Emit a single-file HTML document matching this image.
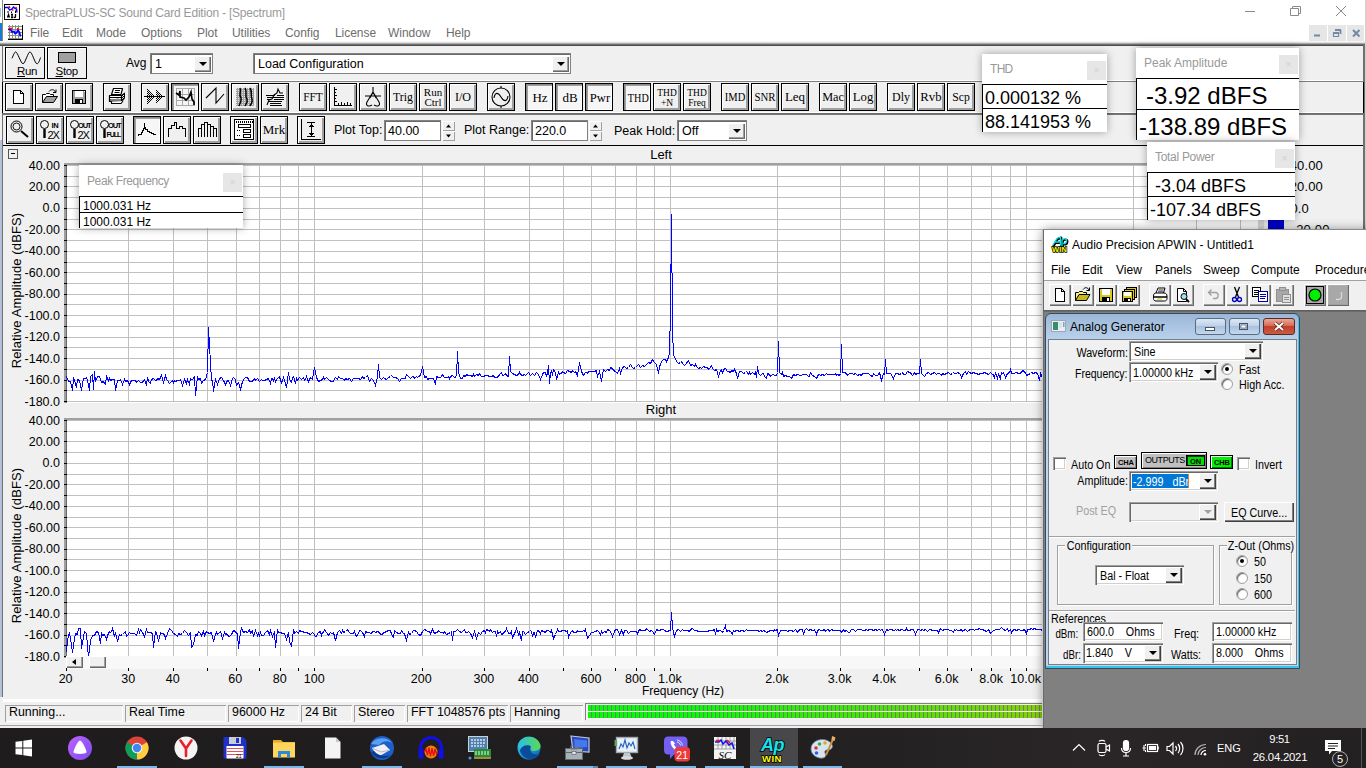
<!DOCTYPE html>
<html lang="en"><head><meta charset="utf-8"><title>SpectraPLUS-SC Sound Card Edition - [Spectrum]</title>
<style>
*{box-sizing:border-box;margin:0;padding:0}
html,body{width:1366px;height:768px;overflow:hidden;background:#f0f0f0;font-family:"Liberation Sans",sans-serif;font-size:12px;color:#000}
.a{position:absolute}
.t{position:absolute;white-space:nowrap;line-height:1}
svg{position:absolute;overflow:visible}
/* classic toolbar buttons */
.b{position:absolute;width:28px;height:28px;background:#f0f0f0;border:1px solid #000;box-shadow:inset 1px 1px 0 #fff,inset -1px -1px 0 #a0a0a0,inset -2px -2px 0 #a0a0a0}
.b.p{background:#f6f6f6;box-shadow:inset 1px 1px 0 #8c8c8c,inset 2px 2px 0 #a0a0a0,inset -1px -1px 0 #fff}
.b svg{left:0;top:0}
.bt{position:absolute;left:0;top:0;width:26px;height:26px;font-family:"Liberation Serif",serif;font-size:12px;text-align:center;line-height:26px;white-space:nowrap}
.bt2{position:absolute;left:0;top:3px;width:26px;font-family:"Liberation Serif",serif;font-size:11px;text-align:center;line-height:10px}
/* combobox classic */
.cb{position:absolute;background:#fff;border:1px solid #828282;box-shadow:inset 1px 1px 0 #696969}
.cbb{position:absolute;right:1px;top:2px;bottom:1px;width:17px;background:#f0f0f0;box-shadow:inset 1px 1px 0 #fff,inset -1px -1px 0 #696969,inset -2px -2px 0 #a0a0a0}
.cbb:after{content:"";position:absolute;left:5px;top:50%;margin-top:-2px;border:4px solid transparent;border-top:4px solid #000;border-bottom:none}
/* floating readout windows */
.fw{position:absolute;background:#fff;box-shadow:0 0 8px rgba(0,0,0,.35)}
.fw .ti{position:absolute;color:#999;font-size:12px;white-space:nowrap;line-height:1}
.fw .x{position:absolute;background:#e6e6e6;color:#d2d2d2;font-size:11px;text-align:center}
.fw .ln{position:absolute;left:0;right:0;height:1px;background:#000}
.fw .lb{position:absolute;left:0;width:1px;background:#000}
.fw .v{position:absolute;white-space:nowrap;line-height:1}
.sb{position:absolute;top:705px;height:17px;box-shadow:inset 1px 1px 0 #a0a0a0,inset -1px -1px 0 #fff;font-size:12.4px;line-height:14px;padding-left:4px;white-space:nowrap}
.ap{position:absolute;left:1043px;top:230px;width:330px;height:498px;background:#808080;box-shadow:-1px 0 0 #c8c8c8,0 -1px 0 #8a8a8a,0 0 10px rgba(0,0,0,.45);border-left:1px solid #6a6a6a}
.ap .m{position:absolute;top:34px;font-size:12px;line-height:1;letter-spacing:0;white-space:nowrap}
.tb{position:absolute;top:54px;width:22px;height:22px;background:#f0f0f0;box-shadow:inset 1px 1px 0 #fff,inset -1px -1px 0 #696969,inset -2px -2px 0 #a0a0a0}
.tb svg{left:0;top:0}
.ag{position:absolute;left:1px;top:83px;width:255px;height:356px;background:linear-gradient(#9bb7d8,#bcd3ec 27px,#c3d8ef 40px,#bfd5ee);border:1px solid #39485a;border-radius:6px 6px 0 0;box-shadow:inset 0 -2px 0 #38c4e8,inset -1px 0 0 #38c4e8}
.ag .cl{position:absolute;left:2px;top:25px;width:249px;height:326px;background:#f0f0f0;border:1px solid #6f7f8f}
.l{position:absolute;white-space:nowrap;line-height:1;font-size:12.500px;margin-top:1px;transform:scaleX(.86);transform-origin:0 0}
.lr{transform-origin:100% 0;text-align:right}
.cc{position:absolute;background:#fff;box-shadow:inset 1px 1px 0 #a0a0a0,inset 2px 2px 0 #696969,inset -1px -1px 0 #fff,inset -2px -2px 0 #d4d0c8}
.cd{position:absolute;right:2px;top:2px;bottom:2px;width:17px;background:#f0f0f0;box-shadow:inset 1px 1px 0 #fff,inset -1px -1px 0 #404040,inset -2px -2px 0 #808080}
.cd:after{content:"";position:absolute;left:5px;top:50%;margin-top:-2px;border:4px solid transparent;border-top:4px solid #000;border-bottom:none}
.cd.dis:after{border-top-color:#a0a0a0}
.rd{position:absolute;width:12px;height:12px;border-radius:50%;background:#fff;box-shadow:inset 1px 1px 1px #606060,inset -1px -1px 0 #fff;border:1px solid #a0a0a0}
.rd.on:after{content:"";position:absolute;left:3px;top:3px;width:4px;height:4px;border-radius:50%;background:#000}
.ck{position:absolute;width:13px;height:13px;background:#fff;box-shadow:inset 1px 1px 0 #a0a0a0,inset 2px 2px 0 #696969,inset -1px -1px 0 #fff,inset -2px -2px 0 #d4d0c8}
.gb{position:absolute;border:1px solid #a0a0a0;box-shadow:1px 1px 0 #fff,inset 1px 1px 0 #fff}
.px{position:absolute;font-family:"Liberation Sans",sans-serif;font-weight:bold;font-size:9px;line-height:1;white-space:nowrap;letter-spacing:.3px}
</style></head><body>
<!-- ===== main window chrome ===== -->
<div class="a" style="left:0;top:0;width:1366px;height:43px;background:#fff"></div>
<div class="a" style="left:0;top:23px;width:2px;height:22px;background:#1a7ad0"></div>
<div class="a" style="left:0;top:8px;width:1px;height:9px;background:#9cc4e8"></div>
<div class="a" style="left:0;top:140px;width:2px;height:557px;background:#b4c0d8"></div>
<div class="a" style="left:2px;top:0;width:1px;height:45px;background:#8a8a8a"></div>
<div class="a" style="left:2px;top:45px;width:1px;height:652px;background:#707070"></div>
<!-- title icon -->
<svg style="left:4px;top:4px" width="16" height="16" viewBox="0 0 16 16"><rect x=".5" y=".5" width="15" height="15" fill="#fff" stroke="#000" shape-rendering="crispEdges"/><path d="M3.500 13.500L4.500 10.500L5.500 13.500M4 12.500H5M8 10V13.500M7 13.500H9M7 10.500H9M11.500 10V12.500C11.500 13.800 10 13.800 10 12.800" stroke="#000" stroke-width="1.300" fill="none"/><path d="M1 3.500H4L5.500 6L7.500 5.500L9.500 3L11 4.500L12.500 5L13 8.500" stroke="#00f" stroke-width="1.400" fill="none"/><path d="M5 2L6 4M8 6H9.500M11.500 3L13 4.500" stroke="#f00" stroke-width="1.400" fill="none"/><path d="M4 7V9M7.500 7.500V9M11.500 6.500V9" stroke="#000" stroke-width="1"/></svg>
<div class="t" style="left:25px;top:7px;font-size:12px;color:#999;letter-spacing:-0.21px">SpectraPLUS-SC Sound Card Edition - [Spectrum]</div>
<!-- window controls -->
<svg style="left:1240px;top:0" width="126" height="24" viewBox="0 0 126 24" fill="none" stroke="#8a8a8a" stroke-width="1"><path d="M5 11.5H15"/><path d="M50.5 8.5H58.5V15.5H50.5Z M52.5 8.5V6.5H60.5V13.5H58.5"/><path d="M96 6L106 16M106 6L96 16"/></svg>
<!-- menu -->
<svg style="left:7px;top:25px" width="16" height="16" viewBox="0 0 16 16"><g shape-rendering="crispEdges"><path d="M1 1.500H15M1 4.500H15M1 7.500H15M1 10.500H15M1 13.500H15M2.500 0V14M5.500 0V14M8.500 0V14M11.500 0V14" stroke="#8c8c8c" stroke-width="1"/><path d="M15.500 0V14.500H1" stroke="#000" stroke-width="1" fill="none"/></g><path d="M1 4.500H3.500L5 7L7 6.500L8 8.500L9.500 8L11 5L12.500 7.500L13.500 11.500" stroke="#00f" stroke-width="1.700" fill="none"/><path d="M1.500 3.500H5.500M10 3.500L12 4.500" stroke="#f00" stroke-width="1.500"/></svg>
<div class="t" style="left:30px;top:27px;font-size:12px;color:#6d6d6d;letter-spacing:-0.05px">
<span class="a" style="left:0">File</span><span class="a" style="left:32px">Edit</span><span class="a" style="left:66px">Mode</span><span class="a" style="left:111px">Options</span><span class="a" style="left:167px">Plot</span><span class="a" style="left:202px">Utilities</span><span class="a" style="left:255px">Config</span><span class="a" style="left:305px">License</span><span class="a" style="left:358px">Window</span><span class="a" style="left:416px">Help</span></div>
<!-- MDI child buttons -->
<div class="a" style="left:1309px;top:25px;width:18px;height:18px;background:#e6e6e6"></div>
<div class="a" style="left:1328px;top:25px;width:18px;height:18px;background:#e6e6e6"></div>
<div class="a" style="left:1347px;top:25px;width:17px;height:18px;background:#e6e6e6"></div>
<svg style="left:1309px;top:25px" width="56" height="18" viewBox="0 0 56 18" fill="none" stroke="#7288a6"><path d="M5 10.500H11" stroke-width="2"/><path d="M24.500 8.500H29.500V11.500H24.500Z" stroke-width="1.200"/><path d="M24 8H30M26 5H32M31.500 5V9" stroke-width="1.800"/><path d="M44 5L50.500 11.500M50.500 5L44 11.500" stroke-width="2"/></svg>
<!-- dark separator under menu -->
<div class="a" style="left:0;top:41px;width:1366px;height:5px;background:linear-gradient(#fff,#e0e0e0 30%,#8c8c8c 60%,#555 80%,#444)"></div>
<div class="a" style="left:1363px;top:44px;width:2px;height:186px;background:#707070"></div>
<div class="a" style="left:1365px;top:0;width:1px;height:728px;background:#d0d0d0"></div>
<!-- toolbar dividers -->
<div class="a" style="left:3px;top:80px;width:1360px;height:1px;background:#fff"></div>
<div class="a" style="left:3px;top:81px;width:1360px;height:1px;background:#808080"></div>
<div class="a" style="left:3px;top:112px;width:1360px;height:1px;background:#fff"></div>
<div class="a" style="left:3px;top:113px;width:1360px;height:2px;background:linear-gradient(#6a6a6a,#7a7a7a)"></div>
<div class="a" style="left:2px;top:82px;width:1px;height:31px;background:#000"></div>
<div class="a" style="left:1363px;top:82px;width:1px;height:31px;background:#000"></div>
<div class="a" style="left:3px;top:145px;width:1360px;height:1px;background:#000"></div>
<!-- ===== toolbar row 1 ===== -->
<svg width="0" height="0"><defs><pattern id="dz" width="2" height="2" patternUnits="userSpaceOnUse"><rect width="1" height="1" fill="#000"/><rect x="1" y="1" width="1" height="1" fill="#000"/></pattern><pattern id="dg" width="2" height="2" patternUnits="userSpaceOnUse"><rect width="2" height="2" fill="#a0a0a0"/><rect width="1" height="1" fill="#e8e8e8"/></pattern></defs></svg>
<div class="b" style="left:5px;top:47px;width:40px;height:32px;box-shadow:inset 1px 1px 0 #fff"><svg width="38" height="30" viewBox="0 0 38 30" fill="none" stroke="#000" stroke-width="1"><path d="M6 10.300C7.500 7 8.500 3.900 9.700 3.900C11.500 3.900 15 15.800 17 15.800C19 15.800 22 3.900 24 3.900C26 3.900 29 15.800 31 15.800C32.500 15.800 33.500 12.500 34.600 9.500"/></svg><div class="t" style="left:11px;top:18px;font-size:11.5px;letter-spacing:-.3px"><u>R</u>un</div></div>
<div class="b" style="left:47px;top:47px;width:40px;height:32px;box-shadow:inset 1px 1px 0 #fff"><svg width="38" height="30" viewBox="0 0 38 30"><rect x="10.500" y="4.500" width="17" height="10" fill="#a0a0a0" stroke="#000"/></svg><div class="t" style="left:7.500px;top:18px;font-size:11.5px;letter-spacing:-.3px"><u>S</u>top</div></div>
<div class="t" style="left:126px;top:57px;font-size:12px">Avg</div>
<div class="cb" style="left:150px;top:53px;width:63px;height:21px"><div class="t" style="left:4px;top:4px;font-size:12.5px">1</div><div class="cbb"></div></div>
<div class="cb" style="left:253px;top:53px;width:318px;height:21px"><div class="t" style="left:4px;top:4px;font-size:12.5px">Load Configuration</div><div class="cbb"></div></div>
<!-- ===== toolbar row 2 ===== -->
<div class="b" style="left:5px;top:83px"><svg width="26" height="26" viewBox="0 0 26 26" shape-rendering="crispEdges"><path d="M7.500 6.500H14.500L17.500 9.500V19.500H7.500Z" fill="#fff" stroke="#000"/><path d="M14.500 6.500V9.500H17.500" fill="none" stroke="#000"/></svg></div>
<div class="b" style="left:35px;top:83px"><svg width="26" height="26" viewBox="0 0 26 26"><path d="M6.500 18.500V10.500H9.500L10.500 9.500H13.500L14.500 10.500H17.500V12.500" fill="#fff" stroke="#000"/><path d="M6.500 18.500L10.500 12.500H21.500L17.500 18.500Z" fill="#a0a0a0" stroke="#000"/><path d="M13 7.500C15 5 18 5 19.500 8M20 5.500V8.500H17" fill="none" stroke="#000"/></svg></div>
<div class="b" style="left:65px;top:83px"><svg width="26" height="26" viewBox="0 0 26 26" shape-rendering="crispEdges"><rect x="6.500" y="6.500" width="13" height="13" fill="#a0a0a0" stroke="#000"/><rect x="9" y="7" width="8" height="6" fill="#fff"/><rect x="9" y="15" width="8" height="4" fill="#000"/><rect x="14" y="16" width="2" height="3" fill="#fff"/><rect x="18" y="7" width="1" height="1" fill="#fff"/></svg></div>
<div class="b" style="left:103px;top:83px"><svg width="26" height="26" viewBox="0 1 26 26" stroke-linejoin="round"><path d="M7.500 11.500L9.500 5.500H18.500L17 11.500Z" fill="#fff" stroke="#000" stroke-width="1.200"/><path d="M11 7.500H16M10.500 9.500H15.500" stroke="#000" stroke-width="1"/><path d="M17.500 12.500L20.500 10V15.500L17.500 19Z" fill="url(#dz)" stroke="#000" stroke-width="1"/><path d="M5.500 12.500H17.500V18.500H5.500Z" fill="#fff" stroke="#000" stroke-width="1.200"/><path d="M5.500 14.500H17.500M5.500 17H17.500" stroke="#000" stroke-width="1.100"/><path d="M12.500 15.800H14.500" stroke="#a0a0a0" stroke-width="1.200"/><path d="M7.500 18.500V20.500H17L19 18" fill="#fff" stroke="#000" stroke-width="1.100"/></svg></div>
<div class="b" style="left:141px;top:83px"><svg width="26" height="26" viewBox="0 0 26 26" shape-rendering="crispEdges"><path d="M5 4L14 12.500L5 21Z" fill="url(#dz)"/><path d="M14 6L21 12.500L14 19Z" fill="url(#dz)"/><path d="M2 12.500H23" stroke="#000"/></svg></div>
<div class="b p" style="left:171px;top:83px"><svg width="26" height="26" viewBox="0 0 26 26"><g shape-rendering="crispEdges" stroke="#a8a8a8" fill="none"><rect x="4.500" y="4.500" width="18" height="17"/><path d="M10.500 4V22M16.500 4V22M4 10.500H23M4 16.500H23"/></g><path d="M4 9L7 11L8 7V13L12 14L14 16L17 13L19 8L20 15L22 18V21" fill="none" stroke="#000" stroke-width="1.7"/></svg></div>
<div class="b" style="left:201px;top:83px"><svg width="26" height="26" viewBox="0 0 26 26"><path d="M4 14L14 4V19L22 10" fill="none" stroke="#000" stroke-width="1.1"/></svg></div>
<div class="b" style="left:231px;top:83px"><svg width="26" height="26" viewBox="0 0 26 26"><rect x="4" y="4" width="18" height="18" fill="url(#dg)" shape-rendering="crispEdges"/><path d="M8 4C10 8 6 10 9 14C10 17 8 19 7 22M13 4C16 9 12 11 15 15C16 18 14 20 13 22M18 4C21 9 18 12 20 15C21 18 19 20 18 22" fill="none" stroke="#000" stroke-width="1.5"/></svg></div>
<div class="b" style="left:261px;top:83px"><svg width="26" height="26" viewBox="0 0 26 26" fill="none" stroke="#000" stroke-width="1.1"><path d="M5 21L7 16L10 15L12 11L15 9L16 5L18 9H21M4 11.500H13M5 13.500H22M5 15.500H9M12 15.500H22M6 17.500H20M8 19.500H19M8 21.500H20M15 11.500H22"/></svg></div>
<div class="b" style="left:299px;top:83px"><div class="bt" style="font-size:13px;transform:scaleX(0.87)">FFT</div></div>
<div class="b" style="left:329px;top:83px"><svg width="26" height="26" viewBox="0 0 26 26" shape-rendering="crispEdges" fill="none" stroke="#000"><path d="M4.500 3V21.500H22M4 5.500H7M4 8.500H6M4 11.500H7M4 14.500H6M4 17.500H7M8.500 21V19M11.500 21V18M14.500 21V19M17.500 21V18M20.500 21V19"/></svg></div>
<div class="b" style="left:359px;top:83px"><svg width="26" height="26" viewBox="0 0 26 26" fill="none" stroke="#000" stroke-width="1.1"><path d="M13 3V8M5 12H21M13 8L7 18C5 22 9 23 12 21M13 8L19 18C21 22 17 23 14 21M13 8L10 14M13 8L16 14"/></svg></div>
<div class="b" style="left:389px;top:83px"><div class="bt" style="font-size:13px;transform:scaleX(0.91)">Trig</div></div>
<div class="b" style="left:419px;top:83px"><div class="bt2">Run<br>Ctrl</div></div>
<div class="b" style="left:449px;top:83px"><div class="bt" style="font-size:13px;transform:scaleX(0.93)">I/O</div></div>
<div class="b" style="left:487px;top:83px"><svg width="26" height="26" viewBox="0 0 26 26" fill="none" stroke="#000" stroke-width="1.1"><circle cx="13" cy="13" r="9"/><path d="M13 2V4M13 22V24M6 14C7 8 10 8 13 13C16 18 19 18 20 12"/></svg></div>
<div class="b p" style="left:525px;top:83px"><div class="bt" style="left:1px;top:1px;font-size:13px;transform:scaleX(1)">Hz</div></div>
<div class="b p" style="left:555px;top:83px"><div class="bt" style="left:1px;top:1px;font-size:13px;transform:scaleX(1)">dB</div></div>
<div class="b p" style="left:585px;top:83px"><div class="bt" style="left:1px;top:1px;font-size:13px;transform:scaleX(0.97)">Pwr</div></div>
<div class="b p" style="left:623px;top:83px"><div class="bt" style="left:1px;top:1px;font-size:13px;transform:scaleX(0.78)">THD</div></div>
<div class="b" style="left:653px;top:83px"><div class="bt2" style="transform:scaleX(.86)">THD<br>+N</div></div>
<div class="b" style="left:683px;top:83px"><div class="bt2" style="transform:scaleX(.86)">THD<br>Freq</div></div>
<div class="b" style="left:721px;top:83px"><div class="bt" style="font-size:13px;transform:scaleX(0.81)">IMD</div></div>
<div class="b" style="left:751px;top:83px"><div class="bt" style="font-size:13px;transform:scaleX(0.83)">SNR</div></div>
<div class="b" style="left:781px;top:83px"><div class="bt" style="font-size:13px;transform:scaleX(1)">Leq</div></div>
<div class="b" style="left:819px;top:83px"><div class="bt" style="font-size:13px;transform:scaleX(0.94)">Mac</div></div>
<div class="b" style="left:849px;top:83px"><div class="bt" style="font-size:13px;transform:scaleX(0.98)">Log</div></div>
<div class="b" style="left:887px;top:83px"><div class="bt" style="font-size:13px;transform:scaleX(0.92)">Dly</div></div>
<div class="b" style="left:917px;top:83px"><div class="bt" style="font-size:13px;transform:scaleX(0.98)">Rvb</div></div>
<div class="b" style="left:947px;top:83px"><div class="bt" style="font-size:13px;transform:scaleX(0.9)">Scp</div></div>
<!-- ===== toolbar row 3 ===== -->
<div class="b" style="left:6px;top:116px"><svg width="26" height="26" viewBox="0 0 26 26" fill="none" stroke="#000"><circle cx="9.500" cy="9.500" r="5.500" stroke-width="1"/><circle cx="9.500" cy="9.500" r="3.500" stroke-width=".9"/><path d="M14 14L21 20" stroke-width="2"/></svg></div>
<div class="b" style="left:36px;top:116px"><svg width="26" height="26" viewBox="0 0 26 26" fill="none" stroke="#000"><circle cx="7.500" cy="7.500" r="4" stroke-width="1"/><path d="M7.500 12V21" stroke-width="2.4"/></svg><div class="t" style="left:14.5px;top:5px;font-size:7.5px;font-weight:bold;letter-spacing:-.4px">IN</div><div class="t" style="left:10.5px;top:13px;font-size:11px;letter-spacing:-1px">2X</div></div>
<div class="b" style="left:66px;top:116px"><svg width="26" height="26" viewBox="0 0 26 26" fill="none" stroke="#000"><circle cx="7.500" cy="7.500" r="4" stroke-width="1"/><path d="M7.500 12V21" stroke-width="2.4"/></svg><div class="t" style="left:11px;top:5px;font-size:7.5px;font-weight:bold;letter-spacing:-1.1px">OUT</div><div class="t" style="left:10.5px;top:13px;font-size:11px;letter-spacing:-1px">2X</div></div>
<div class="b" style="left:96px;top:116px"><svg width="26" height="26" viewBox="0 0 26 26" fill="none" stroke="#000"><circle cx="7.500" cy="7.500" r="4" stroke-width="1"/><path d="M7.500 12V21" stroke-width="2.4"/></svg><div class="t" style="left:11px;top:5px;font-size:7.5px;font-weight:bold;letter-spacing:-1.1px">OUT</div><div class="t" style="left:9.5px;top:14px;font-size:7px;font-weight:bold;letter-spacing:-1px">FULL</div></div>
<div class="b p" style="left:133px;top:116px"><svg width="26" height="26" viewBox="0 0 26 26" shape-rendering="crispEdges" fill="none" stroke="#000"><path d="M4.500 19V17.500H7.500V15.500H8.500V13.500H9.500V11.500H10.500V6V10.500H11.500V12.500H13.500V14.500H15.500V15.500H17.500V16.500H19.500V17.500H22"/></svg></div>
<div class="b" style="left:163px;top:116px"><svg width="26" height="26" viewBox="0 0 26 26" shape-rendering="crispEdges" fill="none" stroke="#000"><path d="M4.500 20V11.500H7.500V8.500H10.500V5.500H12.500V11.500H15.500V9.500H18.500V11.500H21.500V20"/></svg></div>
<div class="b" style="left:193px;top:116px"><svg width="26" height="26" viewBox="0 0 26 26" shape-rendering="crispEdges" fill="none" stroke="#000"><path d="M4.500 20V11.500H7.500V20M7.500 11.500V7.500H10.500V20M10.500 7.500V5.500H13.500V20M13.500 7.500H16.500V20M16.500 9.500H19.500V20M19.500 11.500H22.500V20"/></svg></div>
<div class="b" style="left:230px;top:116px"><svg width="26" height="26" viewBox="0 0 26 26" shape-rendering="crispEdges" fill="none" stroke="#000"><rect x="3.500" y="2.500" width="19" height="20" fill="#fff"/><path d="M3 4.500H23" stroke-width="2" stroke-dasharray="1 1"/><rect x="7.500" y="7.500" width="12" height="3"/><rect x="12.500" y="12.500" width="7" height="3"/><rect x="12.500" y="17.500" width="7" height="3"/><path d="M6 13.500H10M6 18.500H10" stroke-dasharray="1 1"/></svg></div>
<div class="b" style="left:260px;top:116px"><div class="bt" style="font-size:13px">Mrk</div></div>
<div class="b" style="left:297px;top:116px"><svg width="26" height="26" viewBox="0 0 26 26" shape-rendering="crispEdges" fill="none" stroke="#000"><path d="M3.500 2V22.500H23M9 5.500H17M9 19.500H17M13.500 6V19M11 9.500H16M12 8.500H15M11 16.500H16M12 17.500H15"/></svg></div>
<div class="t" style="left:334px;top:124px;font-size:12.5px">Plot Top:</div>
<div class="cb" style="left:384px;top:120px;width:57px;height:21px"><div class="t" style="left:3px;top:4px;font-size:12.5px">40.00</div></div>
<div class="a" style="left:442px;top:121px;width:13px;height:10px;background:#f0f0f0;box-shadow:inset 1px 1px 0 #fff,inset -1px -1px 0 #a0a0a0"></div>
<div class="a" style="left:442px;top:131px;width:13px;height:10px;background:#f0f0f0;box-shadow:inset 1px 1px 0 #fff,inset -1px -1px 0 #a0a0a0"></div>
<svg style="left:442px;top:121px" width="13" height="20" viewBox="0 0 13 20"><path d="M4 6.500H9L6.500 3.500ZM4 13.500H9L6.500 16.500Z" fill="#000"/></svg>
<div class="t" style="left:464px;top:124px;font-size:12.5px">Plot Range:</div>
<div class="cb" style="left:531px;top:120px;width:57px;height:21px"><div class="t" style="left:3px;top:4px;font-size:12.5px">220.0</div></div>
<div class="a" style="left:589px;top:121px;width:13px;height:10px;background:#f0f0f0;box-shadow:inset 1px 1px 0 #fff,inset -1px -1px 0 #a0a0a0"></div>
<div class="a" style="left:589px;top:131px;width:13px;height:10px;background:#f0f0f0;box-shadow:inset 1px 1px 0 #fff,inset -1px -1px 0 #a0a0a0"></div>
<svg style="left:589px;top:121px" width="13" height="20" viewBox="0 0 13 20"><path d="M4 6.500H9L6.500 3.500ZM4 13.500H9L6.500 16.500Z" fill="#000"/></svg>
<div class="t" style="left:614px;top:125px;font-size:12.5px">Peak Hold:</div>
<div class="cb" style="left:677px;top:120px;width:70px;height:21px"><div class="t" style="left:4px;top:4px;font-size:12.5px">Off</div><div class="cbb"></div></div>
<!-- ===== plot pane ===== -->
<div class="a" style="left:8px;top:149px;width:10px;height:10px;border:1px solid #555;background:#f0f0f0"></div><div class="a" style="left:11px;top:153px;width:4px;height:1px;background:#000"></div>
<div class="t" style="left:640px;top:148px;width:42px;text-align:center;font-size:13px">Left</div>
<div class="t" style="left:636px;top:403px;width:50px;text-align:center;font-size:13px">Right</div>
<div class="t" style="right:1306px;top:159.5px;font-size:12.5px">40.00</div>
<div class="t" style="right:1306px;top:181.0px;font-size:12.5px">20.00</div>
<div class="t" style="right:1306px;top:202.4px;font-size:12.5px">0.0</div>
<div class="t" style="right:1306px;top:223.9px;font-size:12.5px">-20.00</div>
<div class="t" style="right:1306px;top:245.3px;font-size:12.5px">-40.00</div>
<div class="t" style="right:1306px;top:266.8px;font-size:12.5px">-60.00</div>
<div class="t" style="right:1306px;top:288.2px;font-size:12.5px">-80.00</div>
<div class="t" style="right:1306px;top:309.7px;font-size:12.5px">-100.0</div>
<div class="t" style="right:1306px;top:331.1px;font-size:12.5px">-120.0</div>
<div class="t" style="right:1306px;top:352.6px;font-size:12.5px">-140.0</div>
<div class="t" style="right:1306px;top:374.0px;font-size:12.5px">-160.0</div>
<div class="t" style="right:1306px;top:395.5px;font-size:12.5px">-180.0</div>
<div class="t" style="right:1306px;top:414.5px;font-size:12.5px">40.00</div>
<div class="t" style="right:1306px;top:436.0px;font-size:12.5px">20.00</div>
<div class="t" style="right:1306px;top:457.4px;font-size:12.5px">0.0</div>
<div class="t" style="right:1306px;top:478.9px;font-size:12.5px">-20.00</div>
<div class="t" style="right:1306px;top:500.3px;font-size:12.5px">-40.00</div>
<div class="t" style="right:1306px;top:521.8px;font-size:12.5px">-60.00</div>
<div class="t" style="right:1306px;top:543.2px;font-size:12.5px">-80.00</div>
<div class="t" style="right:1306px;top:564.7px;font-size:12.5px">-100.0</div>
<div class="t" style="right:1306px;top:586.1px;font-size:12.5px">-120.0</div>
<div class="t" style="right:1306px;top:607.6px;font-size:12.5px">-140.0</div>
<div class="t" style="right:1306px;top:629.0px;font-size:12.5px">-160.0</div>
<div class="t" style="right:1306px;top:650.5px;font-size:12.5px">-180.0</div>
<div class="t" style="left:-84px;top:284px;width:200px;text-align:center;font-size:13px;letter-spacing:.12px;transform:rotate(-90deg)">Relative Amplitude (dBFS)</div>
<div class="t" style="left:-84px;top:539px;width:200px;text-align:center;font-size:13px;letter-spacing:.12px;transform:rotate(-90deg)">Relative Amplitude (dBFS)</div>
<div class="a" style="left:64px;top:163px;width:1195px;height:240px;background:#fff;box-shadow:inset 2px 2px 0 #a0a0a0,inset 3px 3px 0 #696969"></div>
<svg style="left:0;top:0" width="1300" height="768" viewBox="0 0 1300 768" shape-rendering="crispEdges">
<path d="M67 165.5H1258M67 176.5H1258M67 186.5H1258M67 197.5H1258M67 208.5H1258M67 219.5H1258M67 229.5H1258M67 240.5H1258M67 251.5H1258M67 262.5H1258M67 272.5H1258M67 283.5H1258M67 294.5H1258M67 304.5H1258M67 315.5H1258M67 326.5H1258M67 337.5H1258M67 347.5H1258M67 358.5H1258M67 369.5H1258M67 380.5H1258M67 390.5H1258M67 401.5H1258M128.5 166V401M173.5 166V401M207.5 166V401M236.5 166V401M259.5 166V401M280.5 166V401M298.5 166V401M314.5 166V401M422.5 166V401M484.5 166V401M529.5 166V401M563.5 166V401M591.5 166V401M615.5 166V401M636.5 166V401M654.5 166V401M670.5 166V401M777.5 166V401M840.5 166V401M884.5 166V401M919.5 166V401M947.5 166V401M971.5 166V401M991.5 166V401M1010.5 166V401M1026.5 166V401M1133.5 166V401M1196.5 166V401M1240.5 166V401" stroke="#c0c0c0" stroke-width="1" fill="none"/>
<path d="M64 165.5H67M64 176.5H67M64 186.5H67M64 197.5H67M64 208.5H67M64 219.5H67M64 229.5H67M64 240.5H67M64 251.5H67M64 262.5H67M64 272.5H67M64 283.5H67M64 294.5H67M64 304.5H67M64 315.5H67M64 326.5H67M64 337.5H67M64 347.5H67M64 358.5H67M64 369.5H67M64 380.5H67M64 390.5H67M64 401.5H67" stroke="#000" stroke-width="1" fill="none"/>
<path d="M66 376 68 381 70 381 72 390 73 378 74 380 76 387 77 379 79 380 81 390 83 378 85 378 86 377 87 380 89 390 90 376 92 374 93 389 94 371 95 381 97 376 99 376 101 382 103 381 104 383 105 384 106 376 108 380 109 378 110 380 112 379 114 379 115 390 117 380 119 380 120 379 122 384 124 379 125 381 127 380 129 384 131 380 133 380 135 380 136 382 138 380 140 382 142 382 143 380 144 379 146 385 147 377 148 381 150 383 151 379 153 378 155 380 156 380 157 378 159 379 161 375 163 382 165 375 166 379 167 380 169 383 171 381 172 380 173 382 174 380 175 381 177 380 179 380 180 379 182 385 184 379 186 383 187 379 189 384 190 378 191 379 192 379 194 376 195 395 197 376 198 379 200 378 201 383 203 380 205 379 207 372 208 327 209 345 211 380 212 380 213 391 215 379 217 384 219 378 221 377 223 380 225 384 227 380 228 380 230 385 232 378 233 377 235 379 236 385 238 382 240 389 242 381 244 378 245 377 246 377 247 377 249 381 250 381 251 381 252 381 253 379 254 378 255 380 257 378 259 381 261 379 262 380 264 380 266 379 268 378 270 383 271 378 272 378 273 380 274 378 275 381 276 379 278 377 279 376 280 380 281 382 282 380 283 377 284 380 286 387 288 372 289 379 291 382 292 377 293 376 295 383 296 378 297 380 299 377 301 379 303 377 304 380 305 379 306 376 307 379 308 381 310 377 312 379 314 367 316 377 318 381 320 380 322 379 323 377 324 379 325 378 326 377 327 378 329 380 331 381 333 381 334 378 335 377 337 379 338 376 340 378 342 378 344 380 345 378 347 379 349 378 351 381 353 378 355 378 356 378 358 378 360 379 362 376 363 378 365 377 367 375 369 381 371 378 373 380 375 385 377 376 378 364 379 377 381 379 382 378 383 377 384 378 386 379 388 377 390 376 391 375 393 377 395 377 397 378 399 381 401 378 403 378 405 378 406 374 408 376 410 378 412 376 413 376 414 378 415 377 416 376 417 377 418 376 420 375 422 366 424 377 426 376 427 379 429 378 431 378 433 378 435 384 436 376 438 377 440 377 442 374 443 376 444 377 445 377 447 377 448 376 449 378 450 376 452 375 454 377 456 376 457 351 458 372 460 378 462 378 463 375 465 376 466 374 468 375 470 375 472 376 473 374 474 376 476 374 478 375 479 373 481 376 483 376 485 375 487 375 489 376 491 376 493 375 494 377 496 377 498 376 499 374 501 372 502 375 503 375 505 373 506 375 508 376 509 356 510 371 512 373 514 374 516 375 518 374 519 372 520 374 522 375 524 374 525 375 527 373 528 372 530 375 532 373 534 375 536 372 538 374 540 379 542 374 543 372 545 372 546 376 547 372 548 365 549 383 550 373 551 371 552 374 553 369 555 372 556 379 558 372 559 374 560 373 561 373 562 371 563 372 565 373 567 370 569 371 571 372 572 370 574 372 575 371 577 375 579 362 581 371 583 375 585 372 586 372 587 373 588 371 589 371 591 371 593 371 594 371 596 370 597 376 599 371 601 381 603 369 605 371 606 370 607 369 609 370 610 367 612 368 613 370 615 371 617 373 619 368 620 373 622 367 624 366 626 368 628 367 630 364 632 367 633 368 635 367 636 366 638 364 640 367 642 365 644 366 646 364 648 362 650 363 652 359 654 362 656 364 658 373 659 367 660 363 662 360 663 359 665 359 666 361 667 359 668 357 669 352 669 331 670 330 670 264 671 263 671 213 671 272 672 273 672 342 673 343 673 354 674 357 675 358 676 361 678 363 680 362 681 361 682 363 684 365 685 364 686 363 687 361 688 360 690 365 692 364 694 366 695 364 696 366 698 368 700 367 701 368 703 366 705 367 706 367 707 367 708 369 709 368 711 365 712 368 714 370 716 369 718 376 720 370 721 369 722 373 723 369 725 368 727 371 728 371 730 372 731 370 733 371 734 369 736 373 737 378 739 371 741 371 743 373 745 372 746 371 748 374 749 372 750 374 752 372 754 374 755 372 756 377 757 366 758 373 760 375 762 373 763 373 764 376 766 378 767 373 769 374 770 376 772 374 773 374 774 375 776 375 777 372 778 341 779 372 780 373 781 374 782 372 783 376 785 375 787 376 789 376 791 378 793 374 795 375 797 374 798 374 799 375 801 375 802 374 804 374 806 374 808 376 809 376 810 372 812 375 814 376 816 378 818 374 819 374 820 375 822 374 824 375 826 373 827 374 828 374 829 374 830 374 832 374 834 374 835 373 836 375 837 374 839 375 840 373 841 344 842 372 844 372 846 373 847 375 849 373 850 373 852 373 853 374 855 373 857 375 859 374 861 375 862 373 864 373 866 373 868 373 870 375 872 376 873 373 874 374 875 375 877 375 879 372 881 380 883 373 884 374 885 359 886 373 887 373 888 373 890 373 892 376 893 378 895 373 897 373 899 374 901 373 902 372 903 374 905 374 907 371 909 372 910 372 911 374 912 375 914 372 915 374 917 373 919 373 920 359 921 373 922 374 924 376 926 373 928 372 930 374 932 373 934 372 936 374 937 373 939 373 941 375 942 373 944 374 946 373 948 372 950 374 952 373 953 372 954 373 956 373 957 372 959 373 960 374 961 377 963 373 965 371 966 374 968 371 969 372 971 373 973 372 975 373 976 373 978 374 980 373 982 373 984 372 986 373 988 374 990 372 992 374 993 374 994 378 995 372 997 378 998 374 1000 378 1001 372 1002 373 1003 372 1005 377 1007 373 1009 372 1010 369 1011 373 1013 373 1014 373 1015 372 1016 372 1018 373 1020 373 1021 371 1023 370 1024 372 1025 372 1026 375 1028 374 1030 373 1031 372 1033 373 1035 372 1037 373 1038 376 1039 380 1040 373 1041 375 1042 373 1043 372 1045 371 1047 373 1048 374 1049 372 1050 371" stroke="#0000ff" stroke-width="1" fill="none" transform="translate(0.5,0.5)"/>
</svg>
<div class="a" style="left:64px;top:418px;width:1195px;height:240px;background:#fff;box-shadow:inset 2px 2px 0 #a0a0a0,inset 3px 3px 0 #696969"></div>
<svg style="left:0;top:0" width="1300" height="768" viewBox="0 0 1300 768" shape-rendering="crispEdges">
<path d="M67 420.5H1258M67 431.5H1258M67 441.5H1258M67 452.5H1258M67 463.5H1258M67 474.5H1258M67 484.5H1258M67 495.5H1258M67 506.5H1258M67 517.5H1258M67 527.5H1258M67 538.5H1258M67 549.5H1258M67 559.5H1258M67 570.5H1258M67 581.5H1258M67 592.5H1258M67 602.5H1258M67 613.5H1258M67 624.5H1258M67 635.5H1258M67 645.5H1258M67 656.5H1258M128.5 421V656M173.5 421V656M207.5 421V656M236.5 421V656M259.5 421V656M280.5 421V656M298.5 421V656M314.5 421V656M422.5 421V656M484.5 421V656M529.5 421V656M563.5 421V656M591.5 421V656M615.5 421V656M636.5 421V656M654.5 421V656M670.5 421V656M777.5 421V656M840.5 421V656M884.5 421V656M919.5 421V656M947.5 421V656M971.5 421V656M991.5 421V656M1010.5 421V656M1026.5 421V656M1133.5 421V656M1196.5 421V656M1240.5 421V656" stroke="#c0c0c0" stroke-width="1" fill="none"/>
<path d="M64 420.5H67M64 431.5H67M64 441.5H67M64 452.5H67M64 463.5H67M64 474.5H67M64 484.5H67M64 495.5H67M64 506.5H67M64 517.5H67M64 527.5H67M64 538.5H67M64 549.5H67M64 559.5H67M64 570.5H67M64 581.5H67M64 592.5H67M64 602.5H67M64 613.5H67M64 624.5H67M64 635.5H67M64 645.5H67M64 656.5H67" stroke="#000" stroke-width="1" fill="none"/>
<path d="M66 652 67 639 69 632 71 644 72 652 73 645 75 633 77 634 78 628 80 628 81 648 82 642 84 631 86 633 88 657 90 640 92 635 94 635 96 631 98 632 100 643 101 633 102 635 104 634 106 639 107 635 108 633 109 631 110 632 111 631 112 628 114 636 115 632 117 641 119 634 120 635 122 634 123 633 125 631 126 636 127 635 129 632 130 633 132 633 134 633 136 635 138 629 139 632 140 629 142 632 144 636 146 629 147 632 148 632 150 632 152 633 153 647 155 631 156 632 158 641 160 632 161 633 162 633 164 634 165 638 167 633 169 628 171 630 173 633 175 634 177 636 178 633 180 634 182 633 184 630 186 632 188 635 190 632 191 647 193 644 195 634 197 635 198 631 200 633 201 635 203 631 204 635 206 631 207 632 209 633 211 632 213 641 215 634 216 632 217 634 218 633 220 631 222 638 224 632 225 634 226 633 227 635 229 636 231 634 232 632 233 630 235 631 236 633 237 633 238 648 240 631 241 628 243 632 245 631 247 632 249 629 250 633 252 630 253 636 255 630 257 635 258 633 259 635 260 632 261 635 263 635 265 632 266 631 267 630 269 634 270 630 272 636 274 631 275 647 277 629 278 632 280 632 282 633 284 633 286 639 288 632 289 641 291 646 293 629 294 633 296 631 298 633 299 630 301 631 302 631 304 632 306 632 308 633 310 634 312 632 313 633 315 636 316 636 317 633 318 632 320 631 321 635 322 632 323 632 324 629 326 632 328 635 329 633 330 632 331 633 332 633 333 632 335 640 337 632 339 630 341 633 342 630 343 632 345 631 347 629 348 631 350 633 352 633 353 633 354 631 355 634 356 636 358 633 359 630 360 630 362 632 364 636 365 631 367 632 369 632 370 633 371 633 372 631 374 631 375 632 377 631 379 632 380 634 382 634 383 632 384 632 386 631 388 630 390 630 391 634 393 637 394 630 396 632 398 633 400 633 401 630 403 633 404 633 405 637 406 640 408 632 409 634 411 633 413 630 414 630 416 631 418 634 420 635 422 631 424 629 426 630 427 631 429 631 430 633 432 629 434 633 436 632 437 632 438 630 440 632 442 632 443 633 444 631 446 634 448 633 450 632 451 631 452 640 453 631 455 631 457 629 459 631 461 632 462 631 464 629 465 632 466 632 467 632 468 631 470 633 472 637 474 631 476 638 478 632 480 634 482 631 484 630 485 632 486 629 488 630 489 631 490 629 492 632 493 631 494 631 495 631 496 636 497 631 498 633 500 631 501 634 503 633 504 631 505 631 506 628 508 633 510 633 511 631 512 637 513 635 515 631 516 628 518 634 519 632 521 640 522 631 523 631 525 634 527 632 529 631 530 630 531 631 532 636 533 632 534 632 535 637 537 630 539 631 540 633 541 630 543 631 545 632 546 630 548 630 550 632 551 630 553 638 555 634 557 629 558 631 560 631 562 630 564 630 566 631 567 630 568 637 570 632 572 630 573 632 575 632 576 632 577 630 578 631 580 631 582 631 583 630 584 631 585 629 587 638 589 635 591 632 593 632 594 631 595 631 597 630 599 632 600 634 601 631 602 633 604 631 606 632 607 629 609 630 610 631 612 636 614 631 615 629 617 629 619 634 621 630 623 634 624 630 625 630 626 630 628 633 630 631 632 631 633 631 635 631 636 631 637 633 639 629 641 630 643 630 645 630 646 628 647 629 649 631 651 630 652 631 654 634 656 629 658 630 659 630 661 629 663 629 664 630 666 631 667 631 669 630 670 630 671 612 672 626 673 632 674 636 676 630 678 629 680 631 682 629 683 630 685 630 687 630 689 631 690 629 692 628 694 630 695 630 696 630 698 631 699 631 701 631 703 631 705 631 707 631 709 630 711 630 712 630 714 629 715 634 716 629 717 631 719 630 720 630 722 632 723 630 725 625 726 631 728 630 730 631 732 634 733 630 734 631 736 630 737 630 739 631 741 630 742 630 744 631 746 629 747 630 749 630 751 630 752 630 754 630 755 630 757 630 759 631 760 630 762 631 763 630 765 631 766 632 768 631 770 630 772 630 773 631 774 629 775 630 777 629 778 635 780 630 782 630 784 630 786 630 787 631 789 630 791 630 793 631 795 629 797 632 798 630 800 629 802 629 803 634 804 630 805 629 806 628 808 630 810 629 812 630 813 630 814 629 816 634 817 630 819 629 820 630 822 630 824 629 825 631 826 630 827 629 828 629 829 631 831 629 833 630 834 630 836 630 838 630 840 630 841 632 843 629 844 631 846 630 847 631 848 632 849 632 851 629 853 629 855 631 857 629 859 629 861 629 862 630 864 630 866 629 867 630 869 629 871 629 873 630 875 629 877 630 878 629 879 629 880 630 881 629 882 629 884 634 886 629 888 630 889 629 891 629 893 630 894 630 895 629 896 630 897 629 899 630 901 629 902 629 903 630 905 630 906 628 907 630 909 630 911 629 913 629 915 634 917 629 919 629 920 630 922 629 923 630 925 629 927 631 929 629 930 629 932 630 934 630 935 630 937 630 938 632 940 628 942 630 944 629 946 629 948 629 949 630 951 630 953 632 954 629 955 630 956 629 957 630 959 630 961 629 962 631 963 630 965 629 967 631 968 630 970 629 971 629 973 629 974 630 975 629 977 629 979 628 980 629 982 629 984 630 986 631 988 629 990 633 992 631 993 630 994 630 995 629 997 629 999 629 1001 627 1003 629 1005 630 1007 628 1008 631 1010 629 1011 632 1012 630 1014 629 1016 630 1018 629 1019 629 1020 630 1021 630 1022 630 1024 629 1026 633 1027 629 1029 629 1031 628 1032 629 1034 628 1036 629 1038 629 1040 629 1042 630 1043 629 1045 629 1047 632 1049 629" stroke="#0000ff" stroke-width="1" fill="none" transform="translate(0.5,0.5)"/>
</svg>
<div class="a" style="left:66px;top:656px;width:990px;height:13px;background:#f8f8f8"></div>
<div class="a" style="left:66px;top:656px;width:17px;height:12px;background:#f0f0f0;box-shadow:inset 1px 1px 0 #fff,inset -1px -1px 0 #696969,inset -2px -2px 0 #a0a0a0"></div>
<svg style="left:66px;top:656px" width="17" height="12"><path d="M10 3V9L6 6Z" fill="#000"/></svg>
<div class="a" style="left:89px;top:656px;width:17px;height:12px;background:#f0f0f0;box-shadow:inset 1px 1px 0 #fff,inset -1px -1px 0 #696969,inset -2px -2px 0 #a0a0a0"></div>
<svg style="left:0;top:0" width="1060" height="768" shape-rendering="crispEdges"><path d="M66.5 668V671M128.5 668V671M173.5 668V671M207.5 668V671M236.5 668V671M259.5 668V671M280.5 668V671M298.5 668V671M314.5 668V671M422.5 668V671M484.5 668V671M529.5 668V671M563.5 668V671M591.5 668V671M615.5 668V671M636.5 668V671M654.5 668V671M670.5 668V671M777.5 668V671M840.5 668V671M884.5 668V671M919.5 668V671M947.5 668V671M971.5 668V671M991.5 668V671M1010.5 668V671M1026.5 668V671" stroke="#000" fill="none"/></svg>
<div class="t" style="left:35.6px;top:673px;width:60px;text-align:center;font-size:12.5px">20</div>
<div class="t" style="left:98.2px;top:673px;width:60px;text-align:center;font-size:12.5px">30</div>
<div class="t" style="left:142.7px;top:673px;width:60px;text-align:center;font-size:12.5px">40</div>
<div class="t" style="left:205.3px;top:673px;width:60px;text-align:center;font-size:12.5px">60</div>
<div class="t" style="left:249.8px;top:673px;width:60px;text-align:center;font-size:12.5px">80</div>
<div class="t" style="left:284.2px;top:673px;width:60px;text-align:center;font-size:12.5px">100</div>
<div class="t" style="left:391.3px;top:673px;width:60px;text-align:center;font-size:12.5px">200</div>
<div class="t" style="left:453.9px;top:673px;width:60px;text-align:center;font-size:12.5px">300</div>
<div class="t" style="left:498.4px;top:673px;width:60px;text-align:center;font-size:12.5px">400</div>
<div class="t" style="left:561.0px;top:673px;width:60px;text-align:center;font-size:12.5px">600</div>
<div class="t" style="left:605.5px;top:673px;width:60px;text-align:center;font-size:12.5px">800</div>
<div class="t" style="left:639.9px;top:673px;width:60px;text-align:center;font-size:12.5px">1.0k</div>
<div class="t" style="left:747.0px;top:673px;width:60px;text-align:center;font-size:12.5px">2.0k</div>
<div class="t" style="left:809.6px;top:673px;width:60px;text-align:center;font-size:12.5px">3.0k</div>
<div class="t" style="left:854.1px;top:673px;width:60px;text-align:center;font-size:12.5px">4.0k</div>
<div class="t" style="left:916.7px;top:673px;width:60px;text-align:center;font-size:12.5px">6.0k</div>
<div class="t" style="left:961.2px;top:673px;width:60px;text-align:center;font-size:12.5px">8.0k</div>
<div class="t" style="left:995.6px;top:673px;width:60px;text-align:center;font-size:12.5px">10.0k</div>
<div class="t" style="left:623px;top:685px;width:120px;text-align:center;font-size:12px;letter-spacing:-.05px">Frequency (Hz)</div>
<div class="a" style="left:3px;top:699px;width:1360px;height:3px;background:#fff"></div>
<div class="sb" style="left:5px;width:118px">Running...</div>
<div class="sb" style="left:125px;width:101px">Real Time</div>
<div class="sb" style="left:228px;width:71px">96000 Hz</div>
<div class="sb" style="left:301px;width:51px">24 Bit</div>
<div class="sb" style="left:354px;width:51px">Stereo</div>
<div class="sb" style="left:407px;width:101px">FFT 1048576 pts</div>
<div class="sb" style="left:510px;width:73px">Hanning</div>
<div class="a" style="left:585px;top:703px;width:470px;height:17px;background:#f4f0f4;box-shadow:inset 1px 1px 0 #808080"></div>
<div class="a" style="left:588px;top:705px;width:470px;height:6px;background:repeating-linear-gradient(90deg,rgba(0,0,0,0) 0,rgba(0,0,0,0) 3px,#6e806e 3px,#6e806e 4px),linear-gradient(90deg,#00ff00 0,#00ff00 100px,#86d200 455px)"></div>
<div class="a" style="left:588px;top:712px;width:470px;height:6px;background:repeating-linear-gradient(90deg,rgba(0,0,0,0) 0,rgba(0,0,0,0) 3px,#6e806e 3px,#6e806e 4px),linear-gradient(90deg,#00ff00 0,#00ff00 100px,#86d200 455px)"></div>
<!-- ===== right meter strip behind ===== -->
<div class="a" style="left:1258px;top:146px;width:6px;height:90px;background:#d8d8d8"></div>
<div class="a" style="left:1264px;top:146px;width:99px;height:90px;background:#f0f0f0"></div>
<div class="a" style="left:1268px;top:220px;width:16px;height:14px;background:#0000d0"></div>
<div class="t" style="left:1287px;top:158.500px;font-size:13px;letter-spacing:.15px;width:36px;text-align:right">40.00</div>
<div class="t" style="left:1287px;top:180px;font-size:13px;letter-spacing:.15px;width:36px;text-align:right">20.00</div>
<div class="t" style="left:1273px;top:201.500px;font-size:13px;letter-spacing:.15px;width:36px;text-align:right">0.0</div>
<div class="t" style="left:1288px;top:223px;font-size:13px;letter-spacing:.15px;width:40px;text-align:right">-&nbsp;20.00</div>
<!-- ===== floating readouts ===== -->
<div class="fw" style="left:982px;top:54px;width:125px;height:78px"><div class="ti" style="left:8px;top:9px;letter-spacing:-.7px">THD</div><div class="x" style="left:105px;top:7px;width:19px;height:19px;line-height:18px">×</div><div class="ln" style="top:30px"></div><div class="ln" style="top:54px"></div><div class="lb" style="top:30px;height:48px"></div><div class="v" style="left:3px;top:35px;font-size:18px">0.000132 %</div><div class="v" style="left:3px;top:59px;font-size:18px">88.141953 %</div></div>
<div class="fw" style="left:1136px;top:48px;width:163px;height:92px"><div class="ti" style="left:8px;top:9px">Peak Amplitude</div><div class="x" style="left:143px;top:7px;width:19px;height:19px;line-height:18px">×</div><div class="ln" style="top:30px"></div><div class="ln" style="top:61px"></div><div class="lb" style="top:30px;height:62px"></div><div class="v" style="left:10px;top:36px;font-size:24px">-3.92 dBFS</div><div class="v" style="left:3px;top:67px;font-size:24px">-138.89 dBFS</div></div>
<div class="fw" style="left:1147px;top:142px;width:148px;height:78px"><div class="ti" style="left:8px;top:9px;letter-spacing:-.3px">Total Power</div><div class="x" style="left:128px;top:7px;width:19px;height:19px;line-height:18px">×</div><div class="ln" style="top:30px"></div><div class="ln" style="top:54px"></div><div class="lb" style="top:30px;height:48px"></div><div class="v" style="left:8px;top:35px;font-size:18px">-3.04 dBFS</div><div class="v" style="left:3px;top:59px;font-size:18px">-107.34 dBFS</div></div>
<div class="fw" style="left:79px;top:165px;width:164px;height:63px"><div class="ti" style="left:8px;top:10px;letter-spacing:-.39px">Peak Frequency</div><div class="x" style="left:144px;top:8px;width:19px;height:19px;line-height:18px">×</div><div class="ln" style="top:31px"></div><div class="ln" style="top:47px"></div><div class="lb" style="top:31px;height:32px"></div><div class="v" style="left:4px;top:35px;font-size:12px">1000.031 Hz</div><div class="v" style="left:4px;top:51px;font-size:12px">1000.031 Hz</div></div>
<!-- ===== Audio Precision APWIN window ===== -->
<div class="ap">
<div class="a" style="left:0;top:0;width:330px;height:50px;background:#fff"></div>
<svg style="left:8px;top:6px" width="17" height="17" viewBox="0 0 17 17"><g fill="none" stroke-linecap="round" stroke-linejoin="round"><g stroke="#000" stroke-width="2.4" transform="translate(.7,.7)"><path d="M1 9L5 2.500L8.500 1V9M2.500 6H8"/><path d="M10 4V12M10 4.500C11.500 2 15 2.500 14.500 5.500C14.200 7.500 12.500 8 11.500 7.500"/></g><g stroke="#00e4e8" stroke-width="1.300"><path d="M1 9L5 2.500L8.500 1V9M2.500 6H8"/><path d="M10 4V12M10 4.500C11.500 2 15 2.500 14.500 5.500C14.200 7.500 12.500 8 11.500 7.500"/></g></g><text x="0" y="16" font-family="Liberation Sans,sans-serif" font-weight="bold" font-size="7.500" fill="#ffff00" stroke="#000" stroke-width="1.400" paint-order="stroke" letter-spacing=".2">WIN</text></svg>
<div class="t" style="left:28px;top:9px;font-size:12px;letter-spacing:-.05px">Audio Precision APWIN - Untitled1</div>
<div class="m" style="left:7px">File</div><div class="m" style="left:38px">Edit</div><div class="m" style="left:72px">View</div><div class="m" style="left:111px">Panels</div><div class="m" style="left:159px">Sweep</div><div class="m" style="left:207px">Compute</div><div class="m" style="left:271px">Procedure</div>
<div class="a" style="left:0;top:50px;width:330px;height:30px;background:#f0f0f0;border-top:1px solid #a0a0a0"></div>
<div class="a" style="left:0;top:80px;width:330px;height:2px;background:linear-gradient(#5a5a5a,#707070)"></div>
<!-- toolbar -->
<div class="tb" style="left:5px"><svg width="22" height="22" viewBox="0 0 22 22" shape-rendering="crispEdges"><path d="M6.500 4.500H12.500L15.500 7.500V17.500H6.500Z" fill="#fff" stroke="#000"/><path d="M12.500 4.500V7.500H15.500" fill="none" stroke="#000"/></svg></div>
<div class="tb" style="left:28px"><svg width="22" height="22" viewBox="0 0 22 22"><path d="M3.500 16.500V8.500H6.500L7.500 7.500H10.500L11.500 8.500H14.500V10.500" fill="#f8f080" stroke="#000"/><path d="M3.500 16.500L7 10.500H18L14.500 16.500Z" fill="#c8b820" stroke="#000"/><path d="M11 5.500C13 3 15.500 3 17 6M17.500 3.500V6.500H14.500" fill="none" stroke="#000"/></svg></div>
<div class="tb" style="left:51px"><svg width="22" height="22" viewBox="0 0 22 22" shape-rendering="crispEdges"><rect x="4.500" y="4.500" width="13" height="13" fill="#d8c820" stroke="#000"/><rect x="7" y="5" width="8" height="6" fill="#fff"/><rect x="7" y="13" width="8" height="4" fill="#000"/><rect x="12" y="14" width="2" height="3" fill="#fff"/></svg></div>
<div class="tb" style="left:74px"><svg width="22" height="22" viewBox="0 0 22 22" shape-rendering="crispEdges"><rect x="8.500" y="3.500" width="10" height="10" fill="#d8c820" stroke="#000"/><rect x="6.500" y="5.500" width="10" height="10" fill="#d8c820" stroke="#000"/><rect x="4.500" y="7.500" width="10" height="10" fill="#d8c820" stroke="#000"/><rect x="6" y="8" width="7" height="4" fill="#fff"/><rect x="6" y="14" width="7" height="3" fill="#000"/><rect x="10" y="15" width="2" height="2" fill="#fff"/></svg></div>
<div class="tb" style="left:105px"><svg width="22" height="22" viewBox="0 0 22 22"><path d="M7 9L9 4H16L14.500 9" fill="#fff" stroke="#000"/><path d="M9.500 6H14.500M9 7.800H14" stroke="#000" stroke-width=".8"/><path d="M4.500 12C4.500 10 5.500 9 7 9H15C17 9 18 10.500 18 12V14.500C18 16 17 17 15.500 17H7C5.500 17 4.500 16 4.500 14.500Z" fill="#fff" stroke="#000"/><path d="M5 13H18" stroke="#000" stroke-width="1.500"/><path d="M8 15H13" stroke="#d8c820" stroke-width="1.2"/></svg></div>
<div class="tb" style="left:128px"><svg width="22" height="22" viewBox="0 0 22 22"><path d="M5.500 4.500H11.500L14.500 7.500V17.500H5.500Z" fill="#fff" stroke="#000"/><path d="M11.500 4.500V7.500H14.500" fill="none" stroke="#000"/><circle cx="12" cy="12.500" r="3" fill="#a0e0f0" stroke="#000"/><path d="M14 15L17 18" stroke="#000" stroke-width="1.800"/></svg></div>
<div class="tb" style="left:159px"><svg width="22" height="22" viewBox="0 0 22 22" fill="none" stroke="#a0a0a0" stroke-width="1.300"><path d="M6 8.500H12.500C16 8.500 16 14.500 12.500 14.500H10M8.500 5.500L5.500 8.500L8.500 11.500"/></svg></div>
<div class="tb" style="left:182px"><svg width="22" height="22" viewBox="0 0 22 22" fill="none"><path d="M8.500 3L12.500 13M13.500 3L9.500 13" stroke="#000" stroke-width="1.300"/><circle cx="8.500" cy="15.500" r="2" stroke="#0000c0" stroke-width="1.300"/><circle cx="13.500" cy="15.500" r="2" stroke="#0000c0" stroke-width="1.300"/></svg></div>
<div class="tb" style="left:205px"><svg width="22" height="22" viewBox="0 0 22 22" shape-rendering="crispEdges"><rect x="3.500" y="3.500" width="8" height="9" fill="#fff" stroke="#000"/><path d="M5 6.500H10M5 8.500H10M5 10.500H9" stroke="#000"/><rect x="9.500" y="7.500" width="9" height="10" fill="#fff" stroke="#0000a0"/><path d="M11 10.500H17M11 12.500H17M11 14.500H16" stroke="#0000a0"/></svg></div>
<div class="tb" style="left:228px"><svg width="22" height="22" viewBox="0 0 22 22" shape-rendering="crispEdges"><rect x="4.500" y="5.500" width="12" height="12" fill="#a8a8a8" stroke="#909090"/><rect x="7.500" y="3.500" width="6" height="3" fill="#b8b8b8" stroke="#909090"/><rect x="10.500" y="10.500" width="8" height="8" fill="#e0e0e0" stroke="#909090"/><path d="M12 13.500H17M12 15.500H17" stroke="#909090"/></svg></div>
<div class="tb" style="left:260px;background:#b8b8b8"><svg width="22" height="22" viewBox="0 0 22 22"><rect x="2.500" y="2.500" width="17" height="17" fill="#a8a8a8" stroke="#000"/><circle cx="11" cy="11" r="6" fill="#00f000" stroke="#000" stroke-width="1.2"/></svg></div>
<div class="tb" style="left:283px;background:#b0b0b0"><svg width="22" height="22" viewBox="0 0 22 22"><rect x="2" y="2" width="18" height="18" fill="#a8a8a8"/><path d="M14.500 8V13C14.500 15 13 15.500 11 15.500H9" fill="none" stroke="#d8d8d8" stroke-width="1.300"/></svg></div>
<div class="a" style="left:322px;top:55px;width:1px;height:22px;background:#a0a0a0"></div>
<!-- Analog Generator child -->
<div class="ag">
<svg style="left:5px;top:6px" width="15" height="12" viewBox="0 0 15 12"><rect x=".5" y=".5" width="14" height="11" fill="#e8eef4" stroke="#9aa8b8"/><rect x="2" y="2" width="5" height="8" fill="#3c8c6c"/><rect x="8" y="2" width="3" height="6" fill="#d8e4ec"/><rect x="12" y="2" width="1.500" height="5" fill="#88a0b8"/></svg>
<div class="t" style="left:24px;top:7px;font-size:12px">Analog Generator</div>
<div class="a" style="left:149px;top:4px;width:31px;height:17px;border:1px solid #5a6c82;border-radius:3px;background:linear-gradient(#dce8f5,#bfd2e8 45%,#a9c1de 50%,#c5d8ee)"></div>
<div class="a" style="left:183px;top:4px;width:31px;height:17px;border:1px solid #5a6c82;border-radius:3px;background:linear-gradient(#dce8f5,#bfd2e8 45%,#a9c1de 50%,#c5d8ee)"></div>
<div class="a" style="left:217px;top:4px;width:32px;height:17px;border:1px solid #5a2a20;border-radius:3px;background:linear-gradient(#e8a898,#d66a55 45%,#c0402a 50%,#cc5a42)"></div>
<svg style="left:149px;top:4px" width="100" height="17" viewBox="0 0 100 17"><rect x="10.500" y="9.500" width="9" height="3" fill="#fff" stroke="#44546a"/><rect x="44.500" y="5.500" width="8" height="6" fill="none" stroke="#44546a" stroke-width="1"/><rect x="46" y="7" width="5" height="3" fill="#fff" stroke="#44546a" stroke-width=".6"/><path d="M80 5L88 12M88 5L80 12" stroke="#5a2a20" stroke-width="3.600"/><path d="M80 5L88 12M88 5L80 12" stroke="#fff" stroke-width="2"/></svg>
<div class="cl">
<!-- coordinates inside .cl : origin at page (1049,340) -->
<div class="l lr" style="right:168px;top:6px">Waveform:</div>
<div class="cc" style="left:80px;top:1px;width:134px;height:20px"><div class="l" style="left:5px;top:4px">Sine</div><div class="cd"></div></div>
<div class="l lr" style="right:168px;top:27px;transform:scaleX(.84)">Frequency:</div>
<div class="cc" style="left:80px;top:22px;width:89px;height:20px"><div class="l" style="left:4px;top:4px">1.00000 kHz</div><div class="cd"></div></div>
<div class="rd on" style="left:172px;top:23px"></div><div class="l" style="left:190px;top:23px">Fast</div>
<div class="rd" style="left:172px;top:38px"></div><div class="l" style="left:190px;top:38px">High Acc.</div>
<div class="ck" style="left:4px;top:117px"></div><div class="l" style="left:22px;top:118px">Auto On</div>
<div class="a" style="left:65px;top:115px;width:23px;height:14px;background:#c0c0c0;border:1px solid #000;box-shadow:inset 1px 1px 0 #fff,inset -1px -1px 0 #808080"><div class="px" style="left:3px;top:3px;font-size:7.5px;letter-spacing:-.2px">CHA</div></div>
<div class="a" style="left:92px;top:112px;width:66px;height:17px;background:#c0c0c0;border:1px solid #000;box-shadow:inset 1px 1px 0 #fff,inset -1px -1px 0 #808080"><div class="px" style="left:3px;top:3px;font-weight:normal;font-size:9px;letter-spacing:-.45px">OUTPUTS</div><div class="a" style="left:44px;top:2px;width:19px;height:11px;background:#00e000;border:1px solid #000;box-shadow:inset 1px 1px 0 #004000"><div class="px" style="left:3px;top:1.5px;font-size:7.5px;letter-spacing:0">ON</div></div></div>
<div class="a" style="left:161px;top:115px;width:23px;height:14px;background:#00f000;border:1px solid #000;box-shadow:inset 1px 1px 0 #fff,inset -1px -1px 0 #008000"><div class="px" style="left:3px;top:3px;font-size:7.5px;letter-spacing:-.2px">CHB</div></div>
<div class="ck" style="left:188px;top:117px"></div><div class="l" style="left:206px;top:118px">Invert</div>
<div class="l lr" style="right:168px;top:134px">Amplitude:</div>
<div class="cc" style="left:80px;top:131px;width:89px;height:20px"><div class="a" style="left:3px;top:3px;width:56px;height:14px;background:#0078d7"></div><div class="l" style="left:4px;top:4px;color:#fff">-2.999&nbsp;&nbsp;&nbsp;dBr</div><div class="a" style="left:59px;top:3px;width:1px;height:14px;background:#e08030"></div><div class="cd"></div></div>
<div class="l" style="left:27px;top:164px;color:#a0a0a0">Post EQ</div>
<div class="cc" style="left:80px;top:162px;width:89px;height:20px;background:#f0f0f0"><div class="cd dis"></div></div>
<div class="a" style="left:175px;top:162px;width:70px;height:20px;background:#f0f0f0;box-shadow:inset 1px 1px 0 #fff,inset -1px -1px 0 #404040,inset -2px -2px 0 #808080"><div class="l" style="left:7px;top:4px">EQ Curve...</div></div>
<div class="a" style="left:0;top:196px;width:246px;height:1px;background:#a0a0a0"></div><div class="a" style="left:0;top:197px;width:246px;height:1px;background:#fff"></div>
<div class="gb" style="left:8px;top:205px;width:157px;height:60px"></div>
<div class="l" style="left:16px;top:199px;background:#f0f0f0;padding:0 2px">Configuration</div>
<div class="cc" style="left:46px;top:225px;width:89px;height:20px"><div class="l" style="left:5px;top:4px">Bal - Float</div><div class="cd"></div></div>
<div class="gb" style="left:170px;top:205px;width:73px;height:60px"></div>
<div class="l" style="left:178px;top:199px;background:#f0f0f0;padding:0 1px">Z-Out (Ohms)</div>
<div class="rd on" style="left:187px;top:215px"></div><div class="l" style="left:205px;top:215px">50</div>
<div class="rd" style="left:187px;top:232px"></div><div class="l" style="left:205px;top:232px">150</div>
<div class="rd" style="left:187px;top:248px"></div><div class="l" style="left:205px;top:248px">600</div>
<div class="a" style="left:0;top:270px;width:246px;height:1px;background:#a0a0a0"></div><div class="a" style="left:0;top:271px;width:246px;height:1px;background:#fff"></div>
<div class="l" style="left:2px;top:272px">References</div>
<div class="l lr" style="right:218px;top:287px;transform:scaleX(.78)">dBm:</div>
<div class="cc" style="left:34px;top:282px;width:80px;height:19px"><div class="l" style="left:4px;top:3px">600.0&nbsp;&nbsp;&nbsp;&nbsp;Ohms</div></div>
<div class="l" style="left:125px;top:287px">Freq:</div>
<div class="cc" style="left:163px;top:282px;width:80px;height:19px"><div class="l" style="left:4px;top:3px">1.00000 kHz</div></div>
<div class="l lr" style="right:215px;top:308px;transform:scaleX(.78)">dBr:</div>
<div class="cc" style="left:34px;top:303px;width:80px;height:20px"><div class="l" style="left:3px;top:3px">1.840&nbsp;&nbsp;&nbsp;&nbsp;V</div><div class="cd"></div></div>
<div class="l" style="left:122px;top:308px">Watts:</div>
<div class="cc" style="left:163px;top:303px;width:80px;height:20px"><div class="l" style="left:4px;top:3px">8.000&nbsp;&nbsp;&nbsp;&nbsp;Ohms</div></div>
</div></div>
</div>
<!-- ===== taskbar ===== -->
<div class="a" style="left:0;top:725px;width:1043px;height:1px;background:#a0a0a0"></div>
<div class="a" id="tbar" style="left:0;top:728px;width:1366px;height:40px;background:linear-gradient(90deg,#1e1c1d 0,#201e1f 55%,#2a2627 80%,#232021 100%);color:#fff">
<svg style="left:0;top:0" width="1366" height="40" viewBox="0 0 1366 40">
<!-- start -->
<path d="M15.500 13.800L22.300 12.900V19.500H15.500ZM23.300 12.700L32 11.500V19.500H23.300ZM15.500 20.500H22.300V27.100L15.500 26.200ZM23.300 20.500H32V28.500L23.300 27.300Z" fill="#fff"/>
<!-- alice -->
<defs><linearGradient id="al" x1="0" y1="0" x2="1" y2="1"><stop offset="0" stop-color="#c060ff"/><stop offset="1" stop-color="#7a4df0"/></linearGradient></defs>
<circle cx="80" cy="20" r="12" fill="url(#al)"/><path d="M80 12.500C82 12.500 86.500 22 86.500 24C86.500 26.500 73.500 26.500 73.500 24C73.500 22 78 12.500 80 12.500Z" fill="#fff"/>
<!-- chrome -->
<circle cx="137" cy="20" r="11.500" fill="#db4437"/><path d="M137 20L127.040 14.250A11.500 11.500 0 0 0 137 31.500Z" fill="#0f9d58"/><path d="M137 20V31.500A11.500 11.500 0 0 0 146.960 14.250Z" fill="#ffcd40"/><path d="M137 20L127.040 14.250L132 23Z" fill="#0f9d58"/><circle cx="137" cy="20" r="5.300" fill="#f1f1f1"/><circle cx="137" cy="20" r="4.200" fill="#4285f4"/>
<!-- yandex -->
<circle cx="186" cy="20" r="11.500" fill="#f4f4f4"/><path d="M180.500 12.500L186 20.500V28M191.500 12.500L186 20.500" fill="none" stroke="#e8202a" stroke-width="2.600" stroke-linecap="round"/>
<!-- floppy -->
<path d="M223.500 9H243L246.500 12.500V30.500H223.500Z" fill="#2030c8"/><rect x="229" y="9" width="12" height="7" fill="#c8ccd8"/><rect x="236" y="10" width="3" height="5" fill="#2030c8"/><rect x="226.500" y="18" width="17" height="12.500" fill="#fff"/><path d="M227 20.500H243M227 23.500H243M227 26.500H243" stroke="#e05060" stroke-width="1"/><text x="236" y="30" font-size="5" font-family="Liberation Sans,sans-serif" fill="#000">21</text>
<!-- folder -->
<path d="M273 12H281L283 14H295V16H273Z" fill="#e8a820"/><rect x="273" y="14.500" width="22" height="15" fill="#ffd560"/><path d="M278 29.500V23H290V29.500H287V26H281V29.500Z" fill="#2a8ad8"/>
<!-- blank doc -->
<path d="M325 9.500H336L340.500 14V30.500H325Z" fill="#f4f4f4"/><path d="M336 9.500V14H340.500Z" fill="#c8c8c8"/>
<!-- thunderbird -->
<circle cx="382" cy="20" r="12" fill="#1c5fc8"/><path d="M371 16C375 9 388 8 392 15C388 12 382 13 379 17Z" fill="#5aa0f0"/><path d="M372 20L384 16L390 22L378 29Z" fill="#f0f0f4"/><path d="M372 20L381 24L390 22" fill="none" stroke="#b0b8c8" stroke-width="1"/><path d="M371 24C374 30 384 33 391 27C386 29 378 28 374 23Z" fill="#0a3a90"/>
<!-- audacity -->
<path d="M420.500 25V20A10.500 10.500 0 0 1 441.500 20V25" fill="none" stroke="#1010e0" stroke-width="3.200"/><rect x="418.500" y="20" width="5" height="11" rx="2.500" fill="#1010e0"/><rect x="438.500" y="20" width="5" height="11" rx="2.500" fill="#1010e0"/><ellipse cx="431" cy="24" rx="6.500" ry="6.500" fill="#f08010"/><path d="M424.500 24L426 21L427.500 27L429 19.500L430.500 28.500L432 20L433.500 28L435 21L436.500 26L437.500 24" fill="none" stroke="#e01010" stroke-width="1.300"/>
<!-- memory monitor -->
<rect x="468.500" y="8.500" width="19" height="15" fill="#5080b0" stroke="#c8d0d8"/><path d="M471 12H486M471 15H486M471 18H484" stroke="#d8e4f0" stroke-width="1.400" stroke-dasharray="2 1"/><rect x="474" y="21" width="17" height="8" fill="#2a8a3a"/><path d="M476 23V27M479 23V27M482 23V27M485 23V27M488 23V27" stroke="#a0e0a0" stroke-width="1.500"/><path d="M474 30H491" stroke="#d0b040" stroke-width="1.500"/><circle cx="470" cy="30" r="1.500" fill="#40a0f0"/>
<!-- edge -->
<defs><linearGradient id="ed" x1="0" y1="0" x2="1" y2="1"><stop offset="0" stop-color="#35c1f1"/><stop offset=".5" stop-color="#1a9fd8"/><stop offset="1" stop-color="#0c59a4"/></linearGradient><linearGradient id="ed2" x1="0" y1="0" x2="1" y2="0"><stop offset="0" stop-color="#2ac0e0"/><stop offset="1" stop-color="#5ad858"/></linearGradient></defs>
<circle cx="529" cy="20" r="11.500" fill="url(#ed)"/><path d="M518 17C520 8 536 5 540.500 17C541 21 538 23 533 23C530 23 530 20 531 18.500C528 16 522 17 520 22C518.500 20 518 18.500 518 17Z" fill="url(#ed2)"/><path d="M531 18.500C529 22 531 26.500 537 26.500C539 26.500 540 25.500 540 25.500C538 30 531 33 525 29.500C521 27 520 23 520 22C522 17 528 16 531 18.500Z" fill="#0c4a9a"/>
<!-- toolbox -->
<path d="M571 8L589 10V24L573 23Z" fill="#2848c0" stroke="#c0c8d8" stroke-width="1.200"/><path d="M574 11L587 12.500V19L575 20Z" fill="#4878f0"/><rect x="565.500" y="20.500" width="17" height="11" fill="#a8b0b8" stroke="#606870"/><path d="M565.500 24.500H582.500" stroke="#606870"/><rect x="571" y="18" width="6" height="3" fill="none" stroke="#707880"/><rect x="572" y="23.500" width="4" height="3" fill="#e8e8e8" stroke="#505860" stroke-width=".6"/>
<!-- perf monitor -->
<rect x="616.500" y="9.500" width="21" height="15" fill="#e8f0f8" stroke="#a0a8b0" stroke-width="1.400"/><path d="M619 21L621 16L623 19L625 12L627 20L629 15L631 18L633 14L635 21" fill="none" stroke="#2060c0" stroke-width="1.100"/><path d="M624 25H630L631.500 29H622.500Z" fill="#c0c8d0"/><ellipse cx="627" cy="30" rx="6" ry="1.800" fill="#d8dce0"/><rect x="614.500" y="12" width="2.500" height="6" fill="#60a060"/>
<!-- viber -->
<path d="M668 8.500H683C686 8.500 687.500 10 687.500 13V22C687.500 25 686 26.500 683 26.500H674L670 31V26.500H668C665.500 26.500 664 25 664 22V13C664 10 665.500 8.500 668 8.500Z" fill="#7360f2"/><path d="M671 13C670 14 671 18 674 21C677 24 680 24.500 681 23.500L682 22L679.500 20L678.500 21C677 20.500 674.500 18 674 16.500L675 15.500L673 13Z" fill="#fff"/><path d="M677 12C680 12.500 682 14.500 682.500 17.500M677 14C678.800 14.300 680.200 15.500 680.500 17.500" fill="none" stroke="#fff" stroke-width=".8"/>
<rect x="674.500" y="19" width="15.500" height="14.500" rx="4" fill="#f03a3a"/><text x="682.200" y="30.500" text-anchor="middle" font-family="Liberation Sans,sans-serif" font-size="10.500" fill="#fff">21</text>
<!-- spectraplus SC -->
<rect x="713.500" y="8.500" width="23" height="23" fill="#f4f4f4" stroke="#202020"/><path d="M718 9V21M722 9V21M726 9V21M730 9V21M734 9V21M714 13H736M714 17H736M714 21H736" stroke="#909090" stroke-width=".8"/><path d="M715 14H719L721 12L723 16L726 13L729 17L732 15L734 21" fill="none" stroke="#1010f0" stroke-width="1.500"/><path d="M716 12.500H720M727 12L730 15" stroke="#f01010" stroke-width="1.500"/><text x="725" y="30.500" text-anchor="middle" font-family="Liberation Serif,serif" font-style="italic" font-size="11" fill="#000">SC</text>
<!-- apwin active tile -->
<rect x="750" y="0" width="48" height="40" fill="#48484a"/>
<text x="761" y="23" font-family="Liberation Sans,sans-serif" font-style="italic" font-weight="bold" font-size="18" fill="#18e0f0" stroke="#000" stroke-width="1.600" paint-order="stroke" letter-spacing="-.5">Ap</text><text x="762" y="33.500" font-family="Liberation Sans,sans-serif" font-weight="bold" font-size="9.500" fill="#ffff10" stroke="#000" stroke-width="1.400" paint-order="stroke" letter-spacing=".5">WIN</text>
<!-- paint -->
<path d="M811 21C811 14 819 10 826 12C832 14 834 19 831 21C829 22.500 826 21 825 23C824 25 827 27 825 29C822 32 811 29 811 21Z" fill="#d8e4f0" stroke="#7088a8" stroke-width=".8"/><circle cx="816" cy="20" r="1.800" fill="#e03030"/><circle cx="819.500" cy="16" r="1.800" fill="#30b040"/><circle cx="825" cy="15" r="1.800" fill="#f0a020"/><circle cx="816.500" cy="25" r="1.800" fill="#3060e0"/><path d="M834 9L826 27" stroke="#c89040" stroke-width="2"/><path d="M832 8L835.500 9.500L834.500 13L831.500 12Z" fill="#e8b060"/>
<!-- running indicators -->
<g fill="#76b9ed"><rect x="117" y="38" width="40" height="2"/><rect x="264" y="38" width="40" height="2"/><rect x="362" y="38" width="40" height="2"/><rect x="557" y="38" width="36" height="2"/><rect x="606" y="38" width="41" height="2"/><rect x="656" y="38" width="40" height="2"/><rect x="705" y="38" width="39" height="2"/><rect x="750" y="38" width="48" height="2"/><rect x="803" y="38" width="39" height="2"/></g><rect x="593" y="38" width="5" height="2" fill="#5a8ab8"/>
<!-- tray -->
<g fill="none" stroke="#fff" stroke-width="1.200"><path d="M1073 22.500L1079 16.500L1085 22.500"/>
<rect x="1098" y="15.500" width="8" height="9" rx="1.500"/><path d="M1106 19L1109.500 17V23L1106 21M1099 13.500C1100 12 1104 12 1105 13.500M1099 26.500C1100 28 1104 28 1105 26.500"/>
<rect x="1123.500" y="12.500" width="5" height="10" rx="2.500" fill="#fff"/><path d="M1121.500 20C1121.500 26 1130.500 26 1130.500 20M1126 25V28M1123 28H1129"/>
<rect x="1147.500" y="16.500" width="10" height="7" /><path d="M1158 18.500V21.500" stroke-width="1.600"/><rect x="1149" y="18" width="7" height="4" fill="#fff" stroke="none"/><path d="M1142.500 20H1146M1144 17V23M1145.500 16V18M1145.500 22V24" stroke-width="1.100"/>
<path d="M1167 18.500H1169.500L1173 15V26L1169.500 22.500H1167Z"/><path d="M1175.500 18C1176.800 19.500 1176.800 21.500 1175.500 23M1178 16C1180.200 18.500 1180.200 22.500 1178 25M1180.500 14C1183.800 17.500 1183.800 23.500 1180.500 27"/>
<path d="M1195 27C1195 21 1200 16.500 1206 16.500" stroke="#b0b0b0"/><path d="M1198 27C1198 23 1201.500 19.500 1206 19.500" stroke="#b0b0b0"/><path d="M1201 27C1201 24.500 1203.500 22.500 1206 22.500"/><circle cx="1205" cy="26.200" r="1.300" fill="#fff" stroke="none"/>
</g>
<text x="1217" y="24" font-family="Liberation Sans,sans-serif" font-size="11" fill="#fff">ENG</text>
<text x="1279.500" y="15" text-anchor="middle" font-family="Liberation Sans,sans-serif" font-size="11.200" fill="#fff" letter-spacing="-.3">9:51</text>
<text x="1280" y="32.500" text-anchor="middle" font-family="Liberation Sans,sans-serif" font-size="11.300" fill="#fff" letter-spacing="-.2">26.04.2021</text>
<path d="M1325 12H1341V23H1332L1329 26.500V23H1325Z" fill="#fff"/><path d="M1328 15.500H1338M1328 18H1338M1328 20.500H1335" stroke="#222" stroke-width="1"/>
<circle cx="1340" cy="31" r="7.500" fill="#252323" stroke="#b0b0b0" stroke-width="1"/><text x="1340" y="35" text-anchor="middle" font-family="Liberation Sans,sans-serif" font-size="11" fill="#fff">5</text>
<rect x="1361" y="0" width="1" height="40" fill="#555"/>
</svg>
</div>
</body></html>
